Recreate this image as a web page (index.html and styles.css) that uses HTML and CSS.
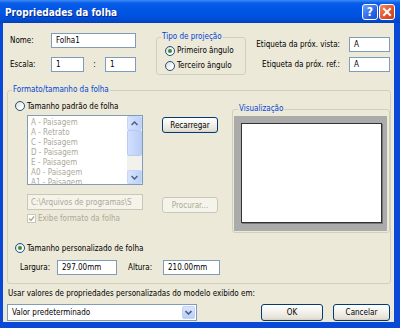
FILE: index.html
```html
<!DOCTYPE html>
<html lang="pt">
<head>
    <meta charset="UTF-8">
    <title>Propriedades da folha</title>
    <link rel="stylesheet" href="styles.css">
</head>
<body>
<div class="window">
    <div class="titlebar">
        <span class="title">Propriedades da folha</span>
        <span class="tb-btn help">?</span>
        <span class="tb-btn close">
            <svg width="10" height="10" viewBox="0 0 10 10"><path d="M2 2 L8 8 M8 2 L2 8" stroke="#fff" stroke-width="2" stroke-linecap="square"/></svg>
        </span>
    </div>
    <div class="client">
        <div class="top">
            <div class="ident">
                <div class="row">
                    <label class="lbl-ident">Nome:</label>
                    <span class="field w-nome">Folha1</span>
                </div>
                <div class="row row-escala">
                    <label class="lbl-ident">Escala:</label>
                    <span class="field w-esc">1</span>
                    <span class="colon">:</span>
                    <span class="field w-esc2">1</span>
                </div>
            </div>
            <fieldset class="group proj">
                <legend>Tipo de projeção</legend>
                <div class="radio-line"><span class="radio on"></span>Primeiro ângulo</div>
                <div class="radio-line"><span class="radio"></span>Terceiro ângulo</div>
            </fieldset>
            <div class="tags">
                <div class="row">
                    <label>Etiqueta da próx. vista:</label>
                    <span class="field w-tag">A</span>
                </div>
                <div class="row row-ref">
                    <label>Etiqueta da próx. ref.:</label>
                    <span class="field w-tag">A</span>
                </div>
            </div>
        </div>

        <fieldset class="group format">
            <legend>Formato/tamanho da folha</legend>
            <div class="format-body">
                <div class="format-left">
                    <div class="radio-line"><span class="radio"></span>Tamanho padrão de folha</div>
                    <div class="list-row">
                        <div class="listbox">
                            <ul class="items">
                                <li>A - Paisagem</li>
                                <li>A - Retrato</li>
                                <li>C - Paisagem</li>
                                <li>D - Paisagem</li>
                                <li>E - Paisagem</li>
                                <li>A0 - Paisagem</li>
                                <li>A1 - Paisagem</li>
                            </ul>
                            <div class="vscroll">
                                <span class="sb-btn"><svg width="7" height="5" viewBox="0 0 7 5"><path d="M0.5 4 L3.5 1 L6.5 4" fill="none" stroke="#4d6185" stroke-width="1.5"/></svg></span>
                                <span class="sb-thumb"></span>
                                <span class="sb-track"></span>
                                <span class="sb-btn"><svg width="7" height="5" viewBox="0 0 7 5"><path d="M0.5 1 L3.5 4 L6.5 1" fill="none" stroke="#4d6185" stroke-width="1.5"/></svg></span>
                            </div>
                        </div>
                        <span class="button btn-reload">Recarregar</span>
                    </div>
                    <div class="path-row">
                        <span class="field disabled w-path">C:\Arquivos de programas\S</span>
                        <span class="button disabled btn-browse">Procurar...</span>
                    </div>
                    <div class="check-line"><span class="checkbox"><svg width="7" height="7" viewBox="0 0 7 7"><path d="M1 3.5 L3 5.5 L6 1.5" fill="none" stroke="#aca899" stroke-width="1.3"/></svg></span>Exibe formato da folha</div>
                    <div class="radio-line custom"><span class="radio on"></span>Tamanho personalizado de folha</div>
                    <div class="size-row">
                        <label class="lbl-larg">Largura:</label>
                        <span class="field w-larg">297.00mm</span>
                        <label class="lbl-alt">Altura:</label>
                        <span class="field w-alt">210.00mm</span>
                    </div>
                </div>
                <fieldset class="group preview">
                    <legend>Visualização</legend>
                    <div class="canvas">
                        <div class="paper"></div>
                    </div>
                </fieldset>
            </div>
        </fieldset>

        <div class="footer">
            <div class="footer-text">Usar valores de propriedades personalizadas do modelo exibido em:</div>
            <div class="footer-row">
                <div class="combo">
                    <span class="combo-text">Valor predeterminado</span>
                    <span class="combo-btn"><svg width="7" height="5" viewBox="0 0 7 5"><path d="M0.5 1 L3.5 4 L6.5 1" fill="none" stroke="#4d6185" stroke-width="1.6"/></svg></span>
                </div>
                <span class="button btn-ok">OK</span>
                <span class="button btn-cancel">Cancelar</span>
            </div>
        </div>
    </div>
</div>
</body>
</html>
```

FILE: styles.css
```css
* {
    box-sizing: border-box;
}
html, body {
    margin: 0;
    padding: 0;
    overflow: hidden;
}
body {
    font-family: "DejaVu Sans Condensed", "DejaVu Sans", sans-serif;
    font-stretch: condensed;
    font-size: 8px;
    color: #000;
    background: #0845d0;
}
.window {
    width: 400px;
    height: 328px;
    display: flex;
    flex-direction: column;
    background: #0a48d8;
}
.titlebar {
    height: 23px;
    display: flex;
    align-items: center;
    padding: 0 5px 0 5px;
    background: linear-gradient(to bottom, #3b8cf5 0, #0c5ee8 3px, #0256e6 8px, #0053e0 16px, #0048cc 21px, #003fb8 23px);
}
.title {
    flex: 1;
    color: #fff;
    font-weight: bold;
    font-size: 10px;
    text-shadow: 1px 1px 0 #0a2a80;
    padding-top: 1px;
}
.tb-btn {
    width: 16px;
    height: 16px;
    border: 1px solid #fff;
    border-radius: 3px;
    display: flex;
    align-items: center;
    justify-content: center;
    color: #fff;
    font-weight: bold;
    font-size: 12px;
    font-family: "DejaVu Sans", sans-serif;
}
.help {
    background: linear-gradient(135deg, #6ea2ff, #2b66e8 60%, #1b4fd0);
    margin-right: 1px;
}
.close {
    background: linear-gradient(135deg, #f08a6a, #e0542c 55%, #c7401c);
}
.client {
    flex: 1;
    background: #ece9d8;
    margin: 0 6px 6px 3px;
    padding: 0 3px 0 4px;
    display: flex;
    flex-direction: column;
}

/* fields */
.field {
    display: flex;
    align-items: center;
    height: 15px;
    background: #fff;
    border: 1px solid #7f9db9;
    padding: 0 4px;
    white-space: nowrap;
    overflow: hidden;
}
.field.disabled {
    background: #f5f4ea;
    border-color: #c9c7ba;
    color: #aca899;
}
.button {
    display: flex;
    align-items: center;
    justify-content: center;
    height: 16px;
    border: 1px solid #003c74;
    border-radius: 3px;
    background: linear-gradient(to bottom, #ffffff 0, #f4f3ee 40%, #e6e3da 85%, #d6d0c5 100%);
}
.button.disabled {
    border-color: #c9c7ba;
    color: #aca899;
    background: #f5f4ea;
}
.row {
    display: flex;
    align-items: center;
}
.radio-line, .check-line {
    display: flex;
    align-items: center;
    height: 10px;
}
.radio {
    width: 10px;
    height: 10px;
    border-radius: 50%;
    border: 1px solid #1c5180;
    background: linear-gradient(135deg, #dcd9cf, #fff 70%);
    margin-right: 2px;
    display: flex;
    align-items: center;
    justify-content: center;
}
.radio.on::after {
    content: "";
    width: 4px;
    height: 4px;
    border-radius: 50%;
    background: #3d8a3a;
}
.checkbox {
    width: 9px;
    height: 9px;
    border: 1px solid #c9c7ba;
    background: #fff;
    margin-right: 2px;
    display: flex;
    align-items: center;
    justify-content: center;
}

/* group boxes */
.group {
    margin: 0;
    padding: 0;
    border: 1px solid #d0d0bf;
    border-radius: 3px;
    min-width: 0;
}
.group legend {
    color: #0046d5;
    padding: 0 1px;
    margin-left: 4px;
    line-height: 10px;
}

/* top area */
.top {
    display: flex;
    height: 60px;
}
.ident {
    width: 149px;
    padding: 10px 0 0 3px;
}
.lbl-ident {
    width: 41px;
}
.w-nome {
    width: 85px;
}
.row-escala {
    margin-top: 9px;
}
.w-esc {
    width: 33px;
}
.colon {
    width: 21px;
    text-align: center;
}
.w-esc2 {
    width: 31px;
}
.proj {
    width: 90px;
    height: 43px;
    margin-top: 9px;
    padding-top: 1px;
}
.proj .radio-line {
    height: 15px;
    margin-left: 8px;
}
.tags {
    margin-left: auto;
    margin-right: 1px;
    padding-top: 14px;
}
.tags .row {
    justify-content: flex-end;
}
.tags label {
    margin-right: 9px;
}
.row-ref {
    margin-top: 5px;
}
.w-tag {
    width: 41px;
}

/* format group */
.format {
    margin-top: 2px;
    padding: 6px 0 8px 0;
}
.format-body {
    display: flex;
}
.format-left {
    width: 212px;
    padding-left: 7px;
}
.list-row {
    display: flex;
    align-items: flex-start;
    margin-top: 4px;
}
.listbox {
    width: 116px;
    height: 70px;
    margin-left: 12px;
    border: 1px solid #7f9db9;
    background: #fff;
    display: flex;
    overflow: hidden;
}
.items {
    flex: 1;
    margin: 0;
    padding: 2px 0 0 3px;
    list-style: none;
    color: #aca899;
}
.items li {
    height: 10px;
    line-height: 10px;
}
.vscroll {
    width: 15px;
    display: flex;
    flex-direction: column;
    background: #f3f1ec;
}
.sb-btn {
    height: 14px;
    display: flex;
    align-items: center;
    justify-content: center;
    background: linear-gradient(to right, #d8e4fd, #bcd0fa);
    border: 1px solid #c5d6fc;
    border-radius: 2px;
}
.sb-thumb {
    height: 26px;
    background: linear-gradient(to right, #d3e0fd, #bacdf8);
    border: 1px solid #b8cbf5;
    border-radius: 2px;
}
.sb-track {
    flex: 1;
}
.btn-reload {
    width: 56px;
    margin: 2px 0 0 19px;
}
.path-row {
    display: flex;
    align-items: flex-start;
    margin-top: 9px;
}
.w-path {
    width: 116px;
    height: 16px;
    margin-left: 12px;
    padding-left: 3px;
}
.btn-browse {
    width: 56px;
    margin: 3px 0 0 19px;
}
.check-line {
    margin: 1px 0 0 12px;
    height: 9px;
    color: #aca899;
}
.custom {
    margin-top: 20px;
}
.size-row {
    display: flex;
    align-items: center;
    margin-top: 7px;
}
.lbl-larg {
    margin-left: 5px;
    width: 37px;
}
.w-larg {
    width: 60px;
}
.lbl-alt {
    width: 46px;
    padding-left: 11px;
}
.w-alt {
    width: 57px;
}
.preview {
    flex: 1;
    margin: 3px 0 0 12px;
    height: 129px;
    padding: 2px 2px 1px 1px;
}
.canvas {
    height: 115px;
    background: #ababab;
    padding: 7px 5px 8px 7px;
}
.paper {
    height: 100%;
    background: #fff;
    border: 1px solid #333;
    box-shadow: 1px 1px 0 #777;
}

/* footer */
.footer {
    margin-top: 5px;
}
.footer-text {
    line-height: 10px;
    margin-left: 1px;
}
.footer-row {
    display: flex;
    align-items: center;
    margin-top: 5px;
}
.combo {
    width: 190px;
    height: 17px;
    display: flex;
    align-items: center;
    background: #fff;
    border: 1px solid #7f9db9;
    padding: 1px;
}
.combo-text {
    flex: 1;
    padding-left: 3px;
}
.combo-btn {
    width: 13px;
    height: 13px;
    display: flex;
    align-items: center;
    justify-content: center;
    background: linear-gradient(to bottom, #dbe6fd, #b9cdf8);
    border: 1px solid #c0d3fb;
    border-radius: 2px;
}
.btn-ok {
    width: 62px;
    height: 17px;
    margin-left: auto;
}
.btn-cancel {
    width: 57px;
    height: 17px;
    margin-left: 10px;
    margin-right: 1px;
}
```
